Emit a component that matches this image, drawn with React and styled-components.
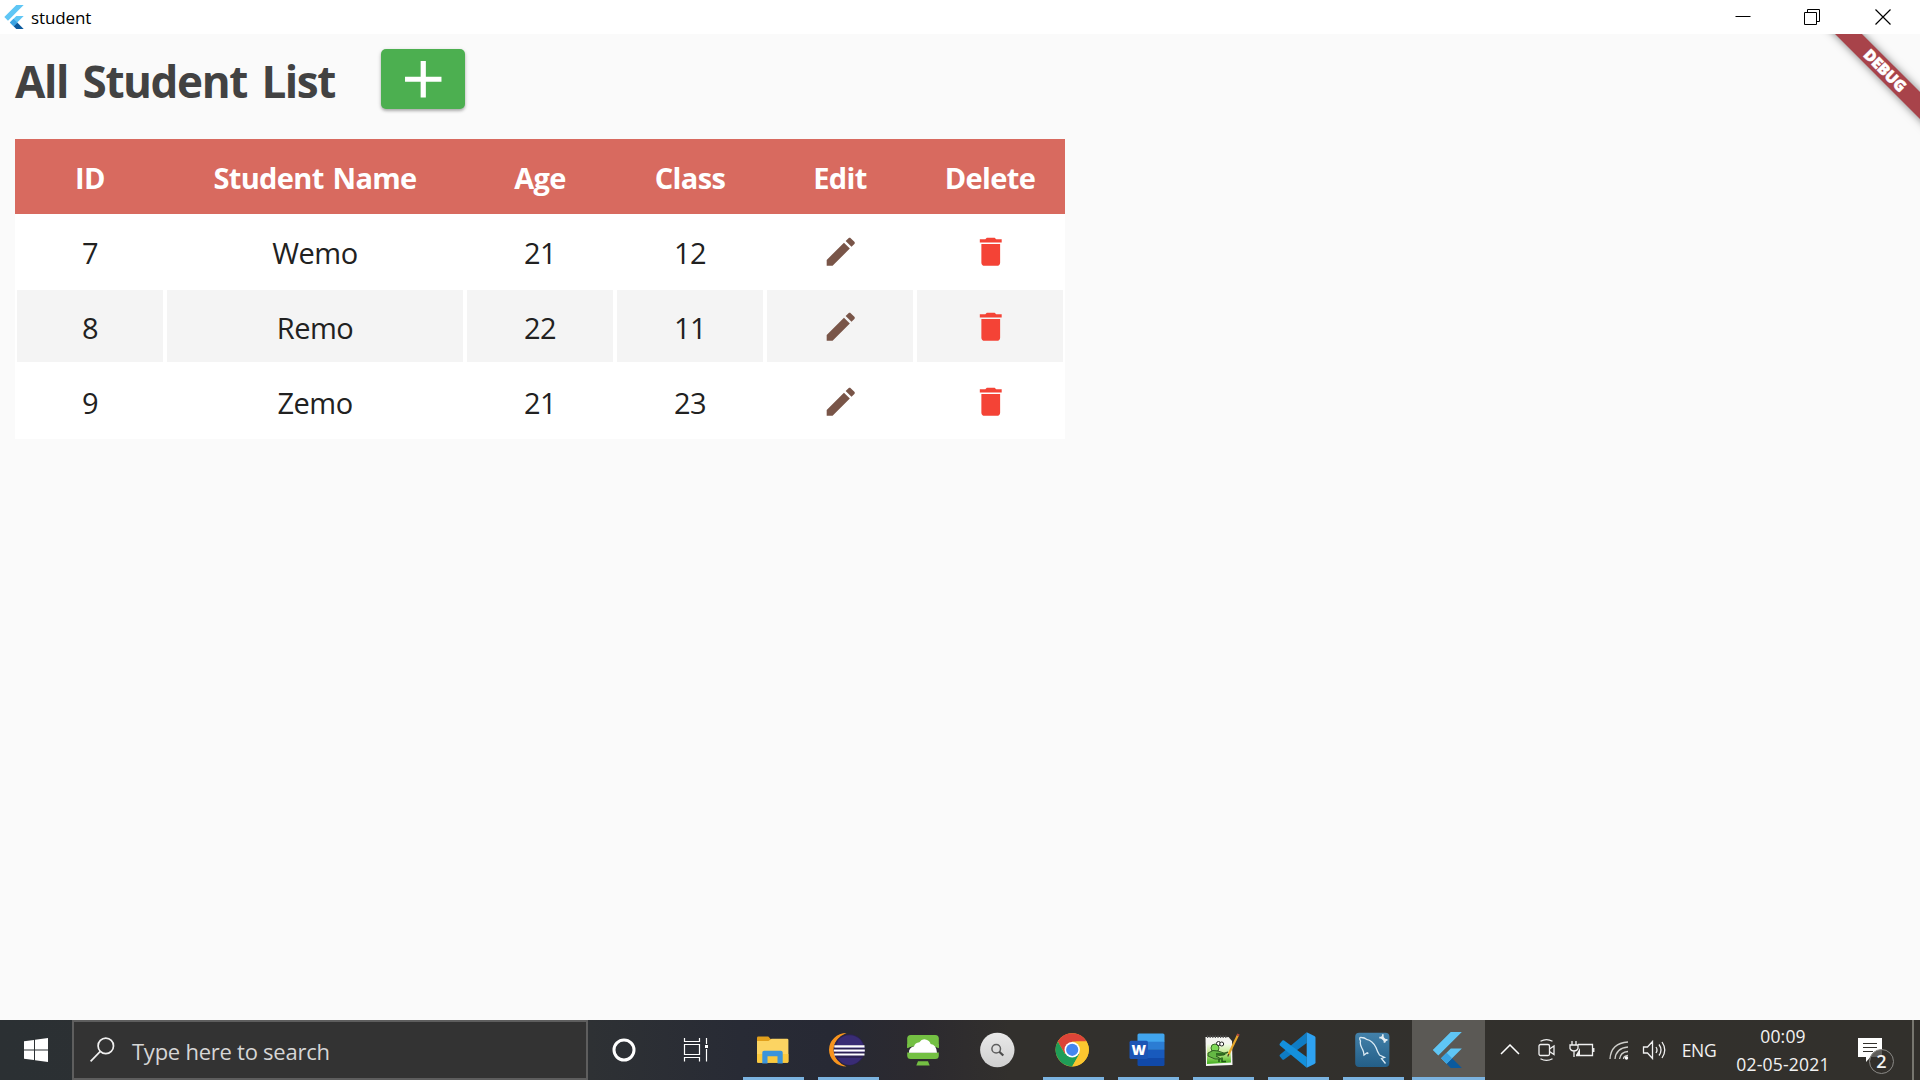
import React from "react";
import styled, { createGlobalStyle } from "styled-components";

const GlobalStyle = createGlobalStyle`
  * { box-sizing: border-box; }
  body { margin: 0; overflow: hidden; }
`;

const Screen = styled.div`
  width: 1920px;
  height: 1080px;
  display: flex;
  flex-direction: column;
  background: #fafafa;
  font-family: "Open Sans", "Noto Sans", sans-serif;
  color: #212121;
  svg { display: block; flex: none; }
`;

/* ---------- window title bar ---------- */
const TitleBar = styled.header`
  height: 34px;
  display: flex;
  align-items: center;
  justify-content: space-between;
  padding-left: 2px;
  background: #fff;
`;
const AppTitle = styled.div`
  display: flex;
  align-items: center;
  gap: 5px;
  font-size: 17px;
  letter-spacing: -0.1px;
  line-height: 32px;
  color: #000;
  span { padding-top: 2px; }
`;
const WindowControls = styled.div`
  display: flex;
  height: 34px;
`;
const ControlButton = styled.button`
  width: ${(p) => p.$width}px;
  padding: 0;
  border: 0;
  background: none;
  display: flex;
  align-items: center;
  justify-content: center;
`;

/* ---------- app body ---------- */
const Body = styled.main`
  position: relative;
  flex: 1;
  overflow: hidden;
  padding: 15px 15px 0;
`;
const HeadingRow = styled.div`
  display: flex;
  align-items: center;
  height: 60px;
  margin-bottom: 30px;
`;
const Heading = styled.h1`
  margin: 0;
  width: 366px;
  font-size: 44px;
  line-height: 62px;
  padding-top: 3px;
  font-weight: 700;
  letter-spacing: -1.4px;
  word-spacing: 4.5px;
  color: #424242;
  white-space: nowrap;
`;
const AddButton = styled.button`
  width: 84px;
  height: 60px;
  padding: 0;
  border: 0;
  border-radius: 5px;
  background: #4caf50;
  box-shadow: 0 2px 3px rgba(0, 0, 0, 0.26), 0 1px 5px rgba(0, 0, 0, 0.1);
  display: flex;
  align-items: center;
  justify-content: center;
`;
const Table = styled.div`
  width: 1050px;
  display: grid;
  grid-template-columns: 150px 300px repeat(4, 150px);
  grid-auto-rows: 75px;
`;
const Cell = styled.div`
  display: flex;
  align-items: center;
  justify-content: center;
  padding: ${(p) => (p.$icon ? "2px 0 0 1px" : "3px 0 0")};
  border: solid #fff;
  border-width: 1px 2px 2px;
  background: ${(p) => (p.$shaded ? "#f4f4f4" : "#fff")};
  font-size: 29px;
  letter-spacing: -0.5px;
`;
const HeadCell = styled(Cell)`
  border-color: #d86a5f;
  background: #d86a5f;
  color: #fff;
  font-weight: 700;
  letter-spacing: -0.65px;
  word-spacing: 2px;
`;
const BannerCorner = styled.div`
  position: absolute;
  top: 0;
  right: 0;
  width: 120px;
  height: 120px;
  overflow: hidden;
`;
const Banner = styled.div`
  position: absolute;
  left: -15px;
  top: 27px;
  width: 200px;
  height: 19px;
  transform: rotate(45deg);
  background: #a8434a;
  box-shadow: 0 0 9px rgba(0, 0, 0, 0.5);
  color: #fff;
  font-size: 15.5px;
  font-weight: 800;
  -webkit-text-stroke: 0.5px #fff;
  letter-spacing: -0.2px;
  line-height: 18px;
  text-align: center;
`;

/* ---------- task bar ---------- */
const TaskBar = styled.footer`
  height: 60px;
  display: flex;
  color: #f2f2f2;
  background: linear-gradient(90deg, #2b3033 0, #2e3134 590px, #282b35 740px, #272934 830px, #2c2a2f 920px, #32302d 1010px, #32302c 100%);
`;
const StartButton = styled.div`
  width: 72px;
  display: flex;
  align-items: center;
  justify-content: center;
`;
const SearchBox = styled.div`
  width: 516px;
  display: flex;
  align-items: center;
  gap: 17px;
  padding: 0 0 1px 16px;
  border: 2px solid #5e5e5e;
  background: #333;
  color: #d6d6d6;
  font-size: 22px;
  letter-spacing: -0.25px;
  span { padding-top: 3px; }
`;
const SystemButton = styled.div`
  width: 72px;
  display: flex;
  align-items: center;
  justify-content: center;
`;
const Apps = styled.div`
  display: flex;
  margin-left: 4px;
`;
const AppButton = styled.div`
  width: 75px;
  display: flex;
  flex-direction: column;
  align-items: center;
  justify-content: space-between;
  padding: 10px 1px 0;
  background: ${(p) => (p.$active ? "#5b5955" : "transparent")};
  background-clip: content-box;
  > svg { margin-right: 1px; }
  ${(p) => p.$active && "padding-top: 0; > svg { margin-top: 10px; }"}
`;
const Underline = styled.div`
  width: ${(p) => (p.$active ? 73 : 61)}px;
  height: 3px;
  background: ${(p) => (p.$open ? "#7bb3e0" : "transparent")};
`;
const TrayItem = styled.div`
  width: ${(p) => p.$width}px;
  display: flex;
  align-items: center;
  justify-content: center;
  font-size: 17.5px;
  letter-spacing: -0.4px;
`;
const Clock = styled.div`
  width: 116px;
  padding: 2px 0 0 2px;
  font-size: 17.5px;
  line-height: 28px;
  letter-spacing: 0.2px;
  text-align: center;
`;
const Notifications = styled.div`
  position: relative;
  width: 72px;
  padding: 18px 0 0 18px;
`;
const Badge = styled.div`
  position: absolute;
  left: 29px;
  top: 29px;
  width: 25px;
  height: 25px;
  border: 1.5px solid #8a8986;
  border-radius: 50%;
  background: rgba(50, 48, 44, 0.78);
  font-size: 18px;
  font-weight: 600;
  line-height: 22px;
  text-align: center;
`;
const ShowDesktop = styled.div`
  width: 8px;
  border-left: 2px solid #77766f;
`;

/* ---------- icons ---------- */
const FlutterIcon = ({ size }) => (
  <svg width={size} height={size} viewBox="0 0 24 24">
    <path fill="#5fc6f5" d="M14.31 0L2.3 12 6 15.7 21.69 0zM14.33 11.07L7.86 17.53l3.69 3.68L21.7 11.07z" />
    <path fill="#0b5a9e" d="M14.33 24H21.7l-6.46-6.47-3.69 3.68z" />
    <path fill="#39a3e3" d="M7.86 17.53l3.69-3.7 3.69 3.7-3.69 3.68z" />
  </svg>
);

const MaterialIcon = ({ size, color, d }) => (
  <svg width={size} height={size} viewBox="0 0 24 24" fill={color}>
    <path d={d} />
  </svg>
);
const ADD = "M19 13h-6v6h-2v-6H5v-2h6V5h2v6h6v2z";
const EDIT =
  "M3 17.25V21h3.75L17.81 9.94l-3.75-3.75L3 17.25zM20.71 7.04c.39-.39.39-1.02 0-1.41l-2.34-2.34c-.39-.39-1.02-.39-1.41 0l-1.83 1.83 3.75 3.75 1.83-1.83z";
const DELETE = "M6 19c0 1.1.9 2 2 2h8c1.1 0 2-.9 2-2V7H6v12zM19 4h-3.5l-1-1h-5l-1 1H5v2h14V4z";

const AppSvg = ({ children }) => (
  <svg width="40" height="40" viewBox="0 0 40 40">{children}</svg>
);

const FolderIcon = () => (
  <AppSvg>
    <path fill="#e2a01c" d="M4 7.8q0-1.3 1.3-1.3h10l3 3.2v6H4z" />
    <path fill="#fcd462" d="M4 11h11.5l3-2.3h15.6q1.3 0 1.3 1.3v21.5q0 1.3-1.3 1.3H5.3Q4 32.8 4 31.5z" />
    <path fill="#fbc93d" d="M4 24h31.4v7.5q0 1.300-1.300 1.300H5.300Q4 32.800 4 31.500z" />
    <path fill="#3a94db" d="M9.300 33.500V22.500q0-1.800 1.800-1.800h16.800q1.800 0 1.800 1.800v11h-5.200v-7.300h-10v7.300z" />
  </AppSvg>
);

const EclipseIcon = () => (
  <AppSvg>
    <path fill="#f7941e" d="M18.500 3A17.500 16.800 0 0 0 18.500 36.600A22 18.500 0 0 1 18.500 3z" />
    <circle cx="21.300" cy="19.800" r="15.600" fill="#2c2255" />
    <path fill="#43348a" d="M10.500 10a15 15 0 0 1 22 0l3 5h-27zM9.500 28h24q-5 7-12 7t-12-7z" opacity=".6" />
    <path fill="#fff" d="M6.300 15.200h30.200v2H6.300zM5.800 19.500h31v2h-31zM6.300 23.600h30.200v1.800H6.300z" />
    <path fill="#b9b2da" d="M6.500 17.200h30v.7h-30zM6.500 21.500h30v.6h-30z" />
  </AppSvg>
);

const CloudIcon = () => (
  <AppSvg>
    <rect x="4.200" y="5" width="31.600" height="24" rx="3.500" fill="#74c043" />
    <path fill="#2c2c31" d="M4 18l4-1.500h24l4 1.500v4.500H4z" />
    <path fill="#74c043" d="M4.200 18.200l4.500-2h22.600l4.500 2V14H4.200z" />
    <path fill="#fff" d="M6 22.700q-.4-5 5-6.200 1-3.800 5.400-4.200 2.600-4 7-2.600 3.700 1.200 4.200 4.400 5.800.8 6.400 8.600z" />
    <path fill="#74c043" d="M15 31.200h10l1.700 4.400H13.300z" />
  </AppSvg>
);

const FinderIcon = () => (
  <AppSvg>
    <defs>
      <linearGradient id="disc" x1="0" y1="0" x2="0" y2="1">
        <stop offset="0" stopColor="#e9e9e9" />
        <stop offset="1" stopColor="#cfcfcf" />
      </linearGradient>
    </defs>
    <circle cx="19.300" cy="20" r="17.200" fill="url(#disc)" />
    <circle cx="18.200" cy="18.700" r="4.300" fill="none" stroke="#5e5e5e" strokeWidth="1.500" />
    <path d="M21.300 21.700l4 3.800" stroke="#4c4c4c" strokeWidth="2.200" />
  </AppSvg>
);

const ChromeIcon = () => (
  <AppSvg>
    <g transform="translate(19.200 19.800)">
      <circle r="16.600" fill="#fbc62f" />
      <path fill="#dd4438" d="M-14.380-8.300A16.600 16.600 0 0 1 14.380-8.300H0L-7.200 4.100z" />
      <path fill="#1f9d57" d="M-14.380-8.300A16.600 16.600 0 0 0 0 16.600L7.200 4.150 0 0-7.200 4.150z" />
      <path fill="#fbc62f" d="M14.380-8.300A16.600 16.600 0 0 1 0 16.600L7.200 4.150 4-8.300z" />
      <circle r="7.700" fill="#fff" />
      <circle r="6.100" fill="#4586f0" />
    </g>
  </AppSvg>
);

const WordLetter = styled.text`
  font: 800 14px "Open Sans", sans-serif;
`;
const WordIcon = () => (
  <AppSvg>
    <path fill="#41a5ee" d="M11 3.400h24q1.500 0 1.500 1.500v7H9.500V4.900q0-1.500 1.500-1.500z" />
    <path fill="#2b7cd3" d="M9.500 11.700h27v8.200h-27z" />
    <path fill="#185abd" d="M9.500 19.900h27V28h-27z" />
    <path fill="#1149a8" d="M9.500 28h27v6.500q0 1.500-1.500 1.500H11q-1.500 0-1.500-1.500z" />
    <rect x="1.500" y="10.800" width="18.500" height="18.200" rx="1.600" fill="#1b55b5" />
    <WordLetter x="10.700" y="24.900" textAnchor="middle" fill="#fff">W</WordLetter>
  </AppSvg>
);

const NotepadIcon = () => (
  <AppSvg>
    <defs>
      <linearGradient id="page" x1="0" y1="0" x2="0" y2="1">
        <stop offset="0" stopColor="#f2faea" />
        <stop offset=".45" stopColor="#c4ea8c" />
        <stop offset="1" stopColor="#3fae1d" />
      </linearGradient>
    </defs>
    <path fill="#f4f4f0" d="M2.500 7h23l3.500 4 .5 24-26.500 1z" />
    <path fill="url(#page)" d="M4 14h23.500l.5 18.500-24 1.500z" />
    <path d="M4 6.700h21" stroke="#555" strokeWidth="2.500" strokeDasharray="1.200 1.400" />
    <circle cx="12" cy="18" r="4" fill="#7ed957" stroke="#376b25" />
    <path fill="#64b844" stroke="#23471b" strokeWidth=".8" d="M5 23q5-4 10-2l6 2 4-1-4 3-8 1 5 3-6 0-7-3z" />
    <circle cx="15.500" cy="13.500" r="2" fill="#fff" stroke="#222" />
    <circle cx="18.700" cy="14" r="2" fill="#fff" stroke="#222" />
    <path d="M16 29v3M19 27.500v4h4M13 24h9" stroke="#1e5913" strokeWidth="1.500" fill="none" />
    <path d="M35 5L25.500 24.500" stroke="#e8a72b" strokeWidth="2.200" />
    <path d="M35.500 4l-.9 2" stroke="#b64c3a" strokeWidth="2.500" />
    <path d="M25.700 24l-.9 2.500" stroke="#4b3520" strokeWidth="1.200" />
  </AppSvg>
);

const CodeIcon = () => (
  <AppSvg>
    <path fill="#0f7cc4" d="M1.900 26.500q-.8-.9 0-1.800L28.700 2.200V13L6.100 29.600q-.9.500-1.700-.2z" />
    <path fill="#1490dc" d="M1.900 13.600q-.8.900 0 1.800l26.800 22.400V27L6.100 10.400q-.9-.5-1.700.2z" />
    <path fill="#2ea2f2" d="M28.700 2.200l7.700 3.700q1.100.6 1.100 1.800v24.600q0 1.200-1.100 1.800l-7.700 3.700z" />
  </AppSvg>
);

const WorkbenchIcon = () => (
  <AppSvg>
    <defs>
      <linearGradient id="bench" x1="0" y1="0" x2="0" y2="1">
        <stop offset="0" stopColor="#4381aa" />
        <stop offset="1" stopColor="#245f88" />
      </linearGradient>
    </defs>
    <rect x="2.200" y="2.800" width="34.200" height="34.200" rx="4" fill="url(#bench)" />
    <path
      d="M14.500 22.500l-3.500 2.500q-.4-4-1.200-5Q6.500 14 7.500 11 5.500 7 8.500 7.500q3 .2 5 1.800 6 1 9.500 8.200 1.500 4.500 3.500 7.500l5 2.500-3 1 4 5M14.500 22.500l.5 1.500"
      fill="none" stroke="#dcebf4" strokeWidth="1.300"
    />
    <path d="M28.200 6.800l4.800 4.500" stroke="#e4edf2" strokeWidth="2.600" />
    <path d="M26.300 7.600h3.500V4.300M31.500 12.800v-3h3" stroke="#e4edf2" strokeWidth="1.700" fill="none" />
  </AppSvg>
);

const APPS = [
  { id: "explorer", icon: <FolderIcon />, open: true },
  { id: "eclipse", icon: <EclipseIcon />, open: true },
  { id: "cloud", icon: <CloudIcon /> },
  { id: "finder", icon: <FinderIcon /> },
  { id: "chrome", icon: <ChromeIcon />, open: true },
  { id: "word", icon: <WordIcon />, open: true },
  { id: "notepad", icon: <NotepadIcon />, open: true },
  { id: "code", icon: <CodeIcon />, open: true },
  { id: "workbench", icon: <WorkbenchIcon />, open: true },
  { id: "flutter", icon: <AppSvg><svg x="1.300" y="2" width="36" height="36"><FlutterIcon size={36} /></svg></AppSvg>, open: true, active: true },
];

const HEADERS = ["ID", "Student Name", "Age", "Class", "Edit", "Delete"];
const STUDENTS = [
  { id: 7, name: "Wemo", age: 21, grade: 12 },
  { id: 8, name: "Remo", age: 22, grade: 11 },
  { id: 9, name: "Zemo", age: 21, grade: 23 },
];

const StudentRow = ({ student, shaded }) => (
  <>
    <Cell $shaded={shaded}>{student.id}</Cell>
    <Cell $shaded={shaded}>{student.name}</Cell>
    <Cell $shaded={shaded}>{student.age}</Cell>
    <Cell $shaded={shaded}>{student.grade}</Cell>
    <Cell $shaded={shaded} $icon><MaterialIcon size={37.5} color="#795548" d={EDIT} /></Cell>
    <Cell $shaded={shaded} $icon><MaterialIcon size={37.5} color="#f44336" d={DELETE} /></Cell>
  </>
);

export default function App() {
  return (
    <Screen>
      <GlobalStyle />
      <TitleBar>
        <AppTitle>
          <FlutterIcon size={24} />
          <span>student</span>
        </AppTitle>
        <WindowControls>
          <ControlButton $width={70}>
            <svg width="16" height="16"><path d="M.5 7.500h15" stroke="#000" /></svg>
          </ControlButton>
          <ControlButton $width={68}>
            <svg width="16" height="16" fill="none" stroke="#000">
              <path d="M.5 3.500h12v12H.5zM3.500 3.500v-3h12v12h-3" />
            </svg>
          </ControlButton>
          <ControlButton $width={74}>
            <svg width="16" height="16"><path d="M.5.5l15 15M15.500.5l-15 15" stroke="#000" strokeWidth="1.200" /></svg>
          </ControlButton>
        </WindowControls>
      </TitleBar>

      <Body>
        <HeadingRow>
          <Heading>All Student List</Heading>
          <AddButton><MaterialIcon size={62.5} color="#fff" d={ADD} /></AddButton>
        </HeadingRow>
        <Table>
          {HEADERS.map((label) => <HeadCell key={label}>{label}</HeadCell>)}
          {STUDENTS.map((s, i) => <StudentRow key={s.id} student={s} shaded={i % 2 === 1} />)}
        </Table>
        <BannerCorner><Banner>DEBUG</Banner></BannerCorner>
      </Body>

      <TaskBar>
        <StartButton>
          <svg width="24" height="24" viewBox="0 0 24 24" fill="#fff">
            <path d="M0 3.300l10-1.400v9.500H0zM11 1.700L24 0v11.400H11zM0 12.400h10v9.600L0 20.700zM11 12.400h13V24l-13-1.800z" />
          </svg>
        </StartButton>
        <SearchBox>
          <svg width="25" height="25" fill="none" stroke="#f0f0f0" strokeWidth="1.700">
            <circle cx="15.800" cy="8.900" r="7.700" />
            <path d="M10.300 14.400L.6 24.300" />
          </svg>
          <span>Type here to search</span>
        </SearchBox>
        <SystemButton>
          <svg width="26" height="26"><circle cx="13" cy="13" r="10" fill="none" stroke="#fff" strokeWidth="3" /></svg>
        </SystemButton>
        <SystemButton>
          <svg width="26" height="24" fill="none" stroke="#fff" strokeWidth="1.200">
            <path d="M1.500 6.500h15v10h-15zM1.500 0v3.500h15V0M1.500 23.500v-4h15v4M23.500 0v6M23.500 11v12.500" />
            <path d="M22 7h3v3h-3z" fill="#fff" stroke="none" />
          </svg>
        </SystemButton>
        <Apps>
          {APPS.map((a) => (
            <AppButton key={a.id} $active={a.active}>
              {a.icon}
              <Underline $open={a.open} $active={a.active} />
            </AppButton>
          ))}
        </Apps>
        <TrayItem $width={48}>
          <svg width="20" height="12" fill="none" stroke="#fff" strokeWidth="1.500"><path d="M1 10l9-9 9 9" /></svg>
        </TrayItem>
        <TrayItem $width={26}>
          <svg width="18" height="24" fill="none" stroke="#f0f0f0" strokeWidth="1.300">
            <rect x="1" y="6.500" width="10.500" height="11" rx="1.500" />
            <path d="M11.500 11l4.500-3v8.500l-4.500-3M2.500 3.200q6-3.200 12 0M2.500 20.800q6 3.200 12 0" />
          </svg>
        </TrayItem>
        <TrayItem $width={44}>
          <svg width="26" height="20" fill="none" stroke="#f0f0f0" strokeWidth="1.300">
            <path d="M9 4.500h14.500v11H7M24.800 8v4M3 1v4M7 1v4M1 5h8v3.500q-1 2.500-4 2.500t-4-2.500zM5 11v6" />
            <path d="M7 15l4-7v7z" fill="#f0f0f0" stroke="none" />
          </svg>
        </TrayItem>
        <TrayItem $width={30}>
          <svg width="20" height="22" fill="none" stroke="#cfcfcb" strokeWidth="1.300">
            <path d="M1 20Q2 4 19 3M6 20Q7 9 19 8M10.500 20q1-7 8.500-7.500M14.500 20q0-3 4.500-3.500" />
            <circle cx="17.500" cy="19" r="1.700" fill="#fff" stroke="none" />
          </svg>
        </TrayItem>
        <TrayItem $width={40}>
          <svg width="24" height="20" fill="none" stroke="#f0f0f0" strokeWidth="1.300">
            <path d="M1.500 7h4l5-5.500v17L5.500 13h-4zM14 7q2 3 0 6M17 4.500q4 5.500 0 11M20 2q5.500 8 0 16" />
          </svg>
        </TrayItem>
        <TrayItem $width={50}>ENG</TrayItem>
        <Clock>
          <div>00:09</div>
          <div>02-05-2021</div>
        </Clock>
        <Notifications>
          <svg width="24" height="25">
            <path d="M0 0h24v19H12.500L8 24V19H0z" fill="#fff" />
            <path d="M5 5.500h14M5 9.500h14M5 13.500h10" stroke="#33312d" strokeWidth="1.200" />
          </svg>
          <Badge>2</Badge>
        </Notifications>
        <ShowDesktop />
      </TaskBar>
    </Screen>
  );
}
